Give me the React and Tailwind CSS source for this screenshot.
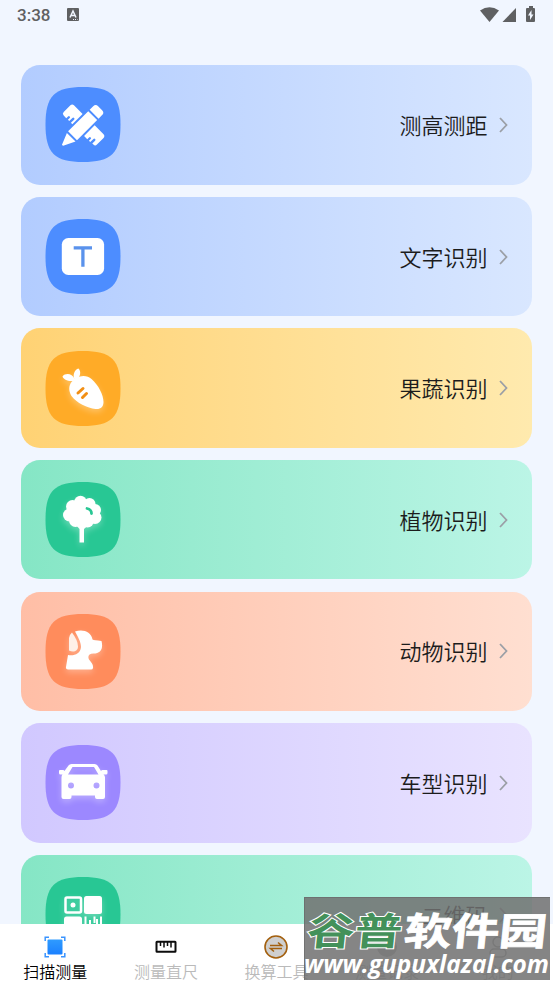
import React, { useState } from "react";

const Squircle = ({ fill, glow, children }) => (
  <svg viewBox="-0.5 0 76 75" className="h-[75px] w-[76px] shrink-0">
    <path
      fill={fill}
      d="M37.5 0C51 0 61 2 67 8s8 16 8 29.5S73 61 67 67s-16 8-29.5 8S14 73 8 67 0 51 0 37.5 2 14 8 8 24 0 37.5 0Z"
    />
    <g className={glow ? "drop-shadow-[0_3px_3px_rgba(255,255,255,0.3)]" : ""}>{children}</g>
  </svg>
);

const PencilRulerIcon = () => (
  <Squircle fill="#4d8dff">
    <g transform="translate(37.3 38.500) rotate(-45)" fill="#fff">
      {/* ruler */}
      <path d="M-6.500-20.500q0-2.500 2.500-2.500h9.500q2.500 0 2.500 2.500V-8.300H-6.500v-2h4.500a1.200 1.200 0 0 0 0-2.400h-4.500v-1.800h2.500a1.200 1.200 0 0 0 0-2.400h-2.500Z" />
      <path d="M-6.500 8.300H8.500v12.200q0 3-3 3H-3.500q-2.500 0-2.500-2.500v-1.600h4a1.200 1.200 0 0 0 0-2.400h-4.500v-1.800h2.500a1.200 1.200 0 0 0 0-2.400h-2.500Z" />
      {/* pencil */}
      <path d="M-28.500-.5q0-.8 1-1L-16.500-6V6.200L-27.500.8q-1-.5-1-1.300ZM-14.500-6.300H14V6.300H-14.500ZM16-6.300h5q3.500 0 3.500 3.500v5.600q0 3.500-3.500 3.500h-5Z" />
    </g>
  </Squircle>
);

const TextIcon = () => (
  <Squircle fill="#4d8dff">
    <rect x="16.300" y="19" width="42.300" height="37" rx="6.500" fill="#fff" />
    <path d="M28.200 28.800H46.500M37.400 28.800V47.700" stroke="#5a92ec" strokeWidth="3.300" fill="none" />
  </Squircle>
);

const CarrotIcon = () => (
  <Squircle fill="#ffab27" glow>
    <g fill="#fff">
      <path d="M26 31c5-7 15-8 20-3 7 6 12 16 12 23 0 5-3 7.500-8 7-8-1-19-6-24-13-3-5-3-10 0-14Z" />
      <path d="M29 29.500c-5 1.500-11-.5-12-4 3-4 10-3 12 2.500-2-4 0-9.500 4-10.500 3 3 2 9-3 12Z" />
    </g>
    <path d="m32.500 42 5-4.500M37 46.500l4-4" stroke="#f28f14" strokeWidth="3" strokeLinecap="round" />
  </Squircle>
);

const TreeIcon = () => (
  <Squircle fill="#28c794" glow>
    <g fill="#fff">
      <circle cx="35" cy="20" r="6.200" />
      <circle cx="27" cy="24.500" r="6.500" />
      <circle cx="44" cy="22" r="6" />
      <circle cx="24" cy="33" r="6.500" />
      <circle cx="30" cy="38.500" r="6.500" />
      <circle cx="42" cy="39" r="6.500" />
      <circle cx="49.500" cy="28" r="6" />
      <circle cx="49.500" cy="35.500" r="6.500" />
      <circle cx="37" cy="31" r="13" />
      <path d="m30.500 43 3.500 4v13.500h4.500V47l4.500-4Z" />
    </g>
    <path d="M41.500 26.500q4.500 1 4.500 5" fill="none" stroke="#28c794" strokeWidth="2.800" strokeLinecap="round" />
  </Squircle>
);

const DogIcon = () => (
  <Squircle fill="#ff8c5c" glow>
    <path
      fill="#fff"
      d="M29.500 17.500c8-2.500 16 0 17.500 8 1 1 4 .5 9 1.500 2 8-1 12.500-8 12.500-5 0-6 3-4.500 6 2.500 3 4.500 5 4 8.500q-.3 1.500-2 1.500H22.500q-2.500 0-2-2.500L22.500 41c6 1 12.500-1 13-8 0-5-3-10-6-15.500Z"
    />
    <path fill="#fff0e7" d="M26.500 18.500q6 8 6 14c0 5-5 6-9 4V24q1-4 3-5.500Z" />
  </Squircle>
);

const CarIcon = () => (
  <Squircle fill="#9c88ff" glow>
    <path
      fill="#fff"
      fillRule="evenodd"
      d="M26 19H49q2 0 3 1.500L55.500 26q.5-1 1.500-1h4q1 0 1 1v2q0 1.500-1.500 1.500H58q1.500 1 1.500 3V52q0 2-2 2h-6q-2 0-2-2v-1.500H26V52q0 2-2 2h-6q-2 0-2-2V32.500q0-2 1-3h-2q-1.500 0-1.500-1.500v-2q0-1 1-1h3q1 0 1.500 1L23 20.500q1-1.500 3-1.500ZM27 22l-4.500 7.500H53L48.500 22ZM25.500 37.500a3 3 0 1 0 0 6 3 3 0 0 0 0-6ZM51 37.500a3 3 0 1 0 0 6 3 3 0 0 0 0-6Z"
    />
  </Squircle>
);

const QrIcon = () => (
  <Squircle fill="#28c794" glow>
    <rect x="20" y="20.500" width="15.500" height="15" rx="1.500" fill="none" stroke="#fff" strokeWidth="2.500" />
    <circle cx="27.500" cy="28" r="2.500" fill="#fff" />
    <rect x="38.500" y="19" width="18" height="18" rx="2.500" fill="#fff" />
    <rect x="18.500" y="39.500" width="18" height="18" rx="2.500" fill="#fff" />
    <path d="M40 39.500V57M44.500 43v14M49 39.500V46M51.500 42v8M55.500 39.500V57" stroke="#fff" strokeWidth="2" />
  </Squircle>
);

const cards = [
  { name: "测高测距", Icon: PencilRulerIcon, bg: "from-[#b2ccff] to-[#d9e7ff]" },
  { name: "文字识别", Icon: TextIcon, bg: "from-[#b2ccff] to-[#d9e7ff]" },
  { name: "果蔬识别", Icon: CarrotIcon, bg: "from-[#ffd274] to-[#ffeaae]" },
  { name: "植物识别", Icon: TreeIcon, bg: "from-[#85e6c5] to-[#bbf5e6]" },
  { name: "动物识别", Icon: DogIcon, bg: "from-[#ffbea6] to-[#ffdfd1]" },
  { name: "车型识别", Icon: CarIcon, bg: "from-[#d1c8ff] to-[#e9e3ff]" },
  { name: "二维码", Icon: QrIcon, bg: "from-[#85e6c5] to-[#bbf5e6]" },
];

const ScanIcon = () => (
  <svg viewBox="0 0 24 24" className="size-6">
    <defs>
      <linearGradient id="scan" x1="0" y1="0" x2="0" y2="1">
        <stop offset="0" stopColor="#2f9bff" />
        <stop offset="1" stopColor="#1b80ff" />
      </linearGradient>
    </defs>
    <rect x="4.500" y="4.500" width="15" height="15" rx="1" fill="url(#scan)" />
    <path
      d="M2.200 6V2.200H6M18 2.200h3.800V6M21.800 18v3.800H18M6 21.800H2.200V18"
      fill="none"
      stroke="#3a94ff"
      strokeWidth="1.500"
    />
  </svg>
);

const RulerIcon = () => (
  <svg viewBox="0 0 24 24" className="size-6">
    <rect x="2.500" y="6.800" width="19" height="10" rx=".5" fill="none" stroke="#0c0c0c" strokeWidth="2" />
    <path d="M6.500 7v4M10 7v5.500M13.500 7v4M17 7v5.500" stroke="#0c0c0c" strokeWidth="1.500" />
  </svg>
);

const ConvertIcon = () => (
  <svg viewBox="0 0 24 24" className="size-6">
    <circle cx="12" cy="12" r="11" fill="#cfcfcf" stroke="#a3600f" strokeWidth="1.600" />
    <path d="M6 10.500h11.500L14 7.500M18 13.500H6.500l3.500 3" fill="none" stroke="#a3600f" strokeWidth="1.600" />
  </svg>
);

const HistoryIcon = () => (
  <svg viewBox="0 0 24 24" className="size-6">
    <circle cx="12" cy="12" r="10" fill="#bbb" />
  </svg>
);

const MineIcon = () => (
  <svg viewBox="0 0 24 24" className="size-6" fill="none" stroke="#aaa" strokeWidth="1.500">
    <circle cx="12" cy="7" r="5" />
    <rect x="4" y="14" width="16" height="8" rx="4" />
  </svg>
);

const tabs = [
  { name: "扫描测量", Icon: ScanIcon },
  { name: "测量直尺", Icon: RulerIcon },
  { name: "换算工具", Icon: ConvertIcon },
  { name: "测量记录", Icon: HistoryIcon },
  { name: "我的", Icon: MineIcon },
];

const StatusBar = () => (
  <header className="flex h-[30px] shrink-0 items-center justify-between px-[17px] text-[#5f6062]">
    <div className="flex items-center gap-[17px]">
      <span className="font-[Roboto] text-[17px] leading-[30px] font-medium">3:38</span>
      <svg viewBox="0 0 12 13" className="mb-px h-[13px] w-3">
        <rect width="12" height="13" rx="1" fill="#5f6062" />
        <path d="M3 9.500 6 3l3 6.500M4 7.500h4" fill="none" stroke="#f1f6ff" strokeWidth="1.500" />
        <path d="M6 11.500h4.500" stroke="#f1f6ff" strokeWidth="1" strokeDasharray="1 1" />
      </svg>
    </div>
    <svg viewBox="0 0 56 18" className="h-[18px] w-14" fill="#5f6062">
      <path d="M0 4.500Q9.500-2 19 4.500L9.500 16Z" />
      <path d="M22.500 16H36V2Z" />
      <path d="M48 2h1V0h4v2h1q1 0 1 1v12q0 1-1 1h-7q-1 0-1-1V3q0-1 1-1Z" />
      <path d="m51.500 4-3.500 5.500h2V14l3.500-5.500h-2Z" fill="#f1f6ff" />
    </svg>
  </header>
);

const App = () => {
  const [active, setActive] = useState(0);

  return (
    <div className="relative flex h-[984px] w-[553px] flex-col overflow-hidden bg-[#f1f6ff] font-['Noto_Sans_CJK_SC',sans-serif]">
      <StatusBar />

      <main className="flex min-h-0 flex-1 flex-col gap-[12.3px] overflow-hidden px-[21px] pt-[35.3px]">
        {cards.map(({ name, Icon, bg }) => (
          <button
            key={name}
            className={`flex h-[119.3px] w-full shrink-0 items-center rounded-[19px] bg-linear-to-r px-[24px] ${bg}`}
          >
            <Icon />
            <span className="ml-auto pb-[2px] text-[22px] leading-[30px] font-[350] text-[#1c1c1c]">{name}</span>
            <svg viewBox="0 0 9 16" className="ml-[11.500px] h-4 w-[9px]" fill="none" stroke="#9b9fa6" strokeWidth="1.800">
              <path d="m1 1 6.500 7L1 15" />
            </svg>
          </button>
        ))}
      </main>

      <nav className="flex h-[60px] shrink-0 bg-white">
        {tabs.map(({ name, Icon }, index) => (
          <button
            key={name}
            onClick={() => setActive(index)}
            className="flex flex-1 flex-col items-center pt-[11px]"
          >
            <Icon />
            <span
              className={`mt-[2px] text-[16px] leading-[20px] font-[350] ${
                active === index ? "text-black" : "text-[#bababa]"
              }`}
            >
              {name}
            </span>
          </button>
        ))}
      </nav>

      {/* site mark over the corner */}
      <div className="absolute top-[897px] left-[304px] h-[83px] w-[246px] border-t border-l border-[#666]/60 bg-[#707070]/85">
        <svg viewBox="0 0 246 83" className="h-[83px] w-[246px] overflow-visible">
          <g
            fontFamily="'Noto Sans CJK SC', sans-serif"
            fontWeight="700"
            fontSize="47.500"
            transform="translate(4 46.500) skewX(-6) scale(1 .8)"
            stroke="#fff"
            paintOrder="stroke"
          >
            <text x="-3" y="0" fill="#43915a" strokeWidth="2.500">谷普</text>
            <text x="94" y="0" fill="#fff" strokeWidth="1">软件园</text>
          </g>
          <text
            x="-1"
            y="75"
            fill="#fff"
            fontFamily="'Open Sans', sans-serif"
            fontWeight="700"
            fontStyle="italic"
            fontSize="24.500"
            textLength="245"
            lengthAdjust="spacingAndGlyphs"
          >
            www.gupuxlazal.com
          </text>
        </svg>
      </div>
    </div>
  );
};

export default App;
